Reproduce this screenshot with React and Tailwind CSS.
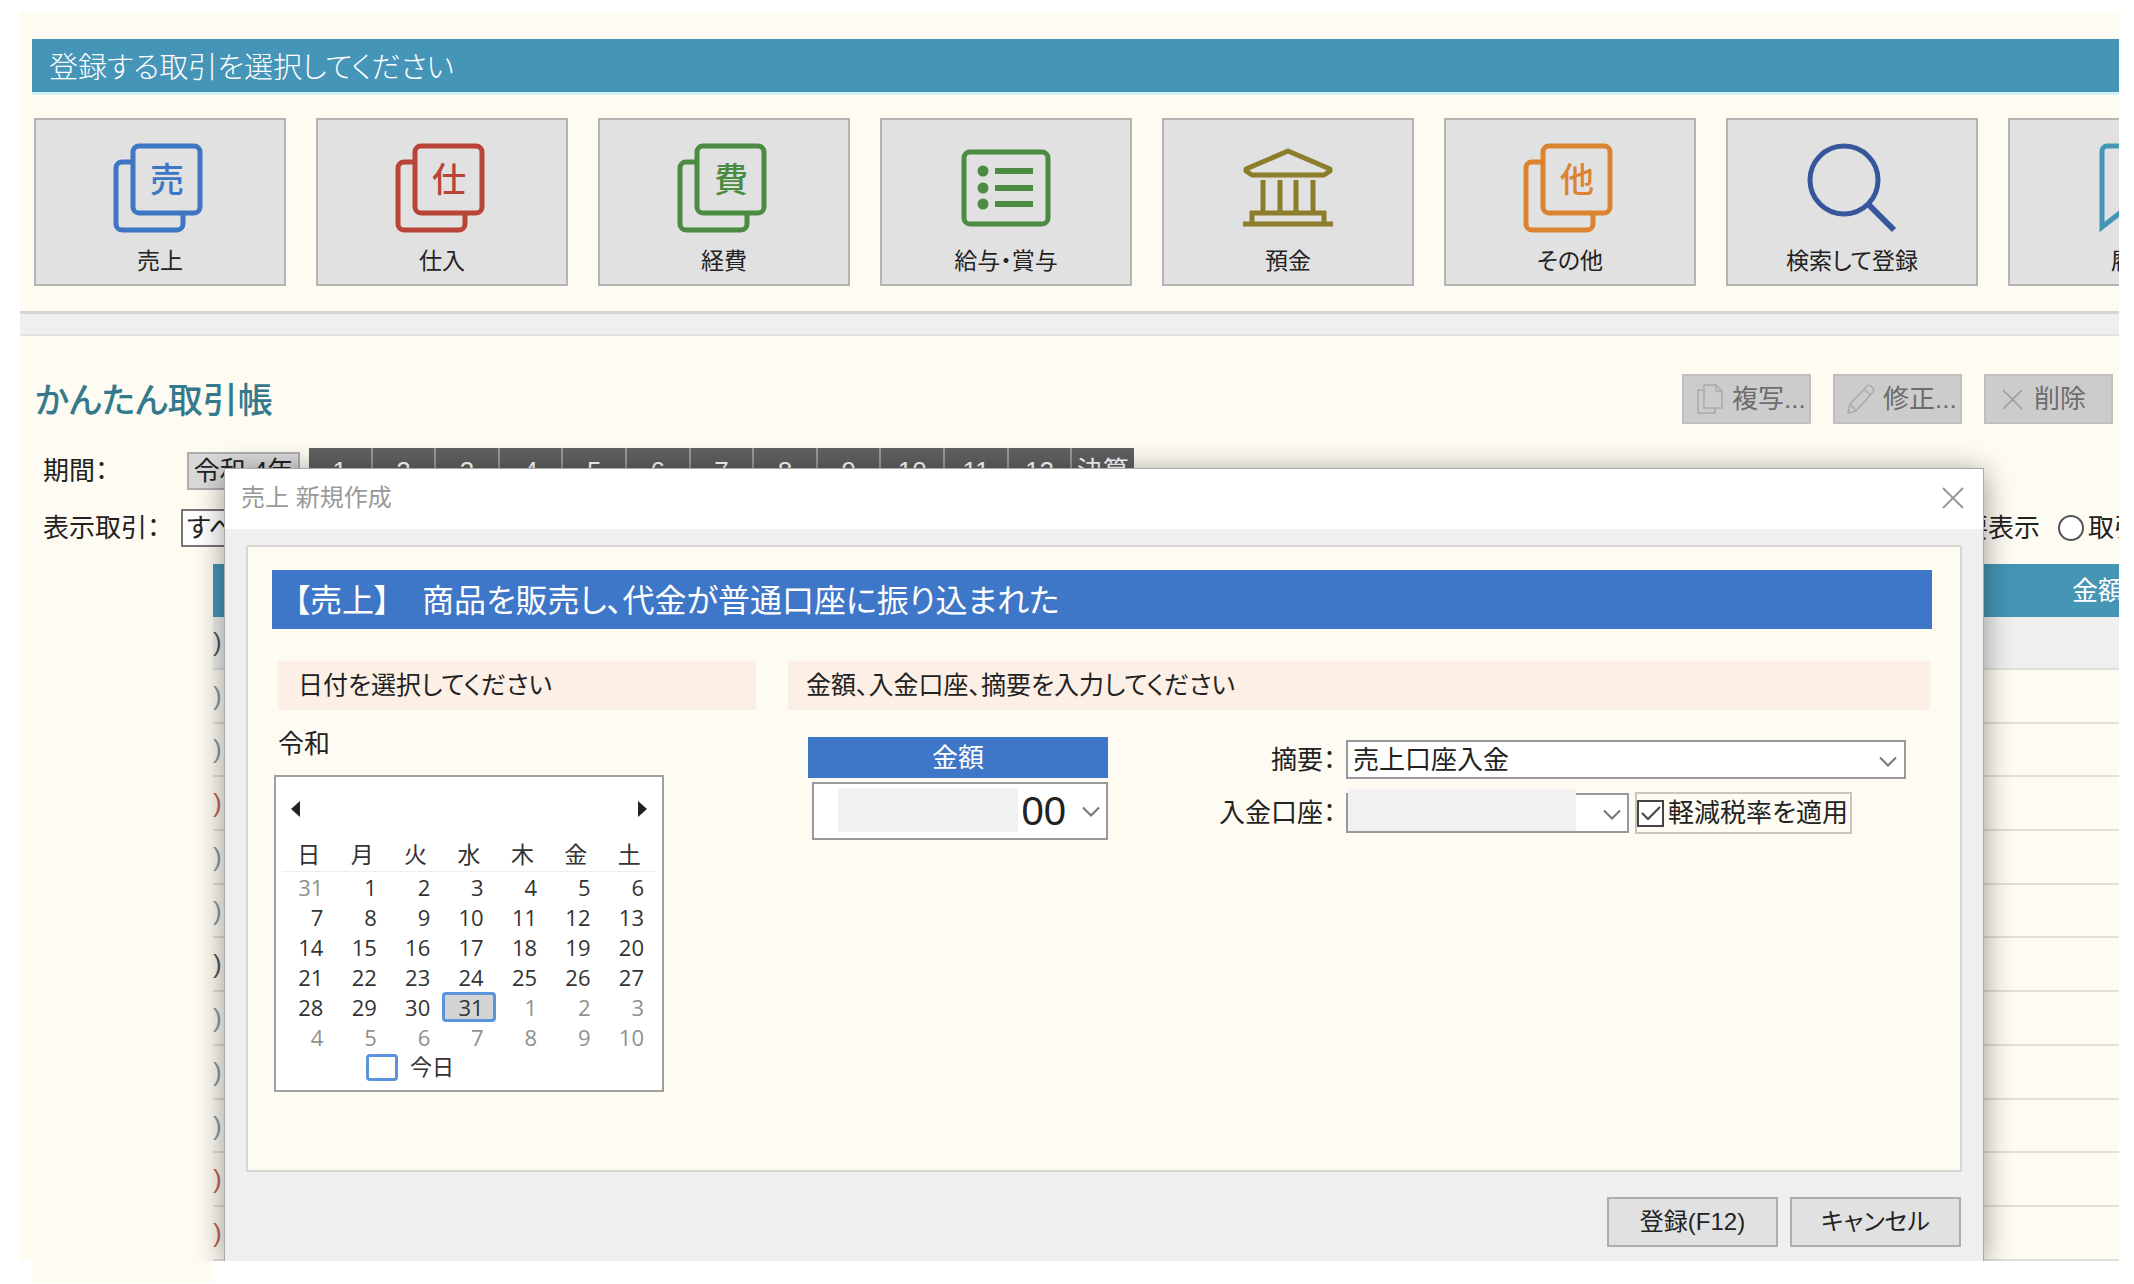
const DocIcon = ({ char, className }) => (
  <svg width="90" height="90" viewBox="2 0 90 90" fill="none" stroke="currentColor" strokeWidth="5" className={`overflow-visible ${className}`}>
    <path d="M18 19 H9 a6 6 0 0 0 -6 6 V81 a6 6 0 0 0 6 6 H64 a6 6 0 0 0 6 -6 V71" />
    <rect x="20" y="3" width="67" height="67" rx="6" />
    <text x="54" y="49" textAnchor="middle" fontSize="34" fontWeight="500" fill="currentColor" stroke="none">
      {char}
    </text>
  </svg>
);

const ListIcon = () => (
  <svg width="90" height="90" viewBox="0 0 90 90" fill="none" stroke="currentColor" strokeWidth="5" className="text-[#4c8c42]">
    <rect x="3" y="9" width="84" height="72" rx="6" />
    <path d="M34 28 H72 M34 45 H72 M34 61 H72" strokeWidth="6" />
    <g fill="currentColor" stroke="none">
      <circle cx="22" cy="28" r="5.5" />
      <circle cx="22" cy="45" r="5.5" />
      <circle cx="22" cy="61" r="5.5" />
    </g>
  </svg>
);

const BankIcon = () => (
  <svg width="90" height="90" viewBox="0 0 90 90" fill="none" stroke="currentColor" strokeWidth="5" className="text-[#8c7d2b]">
    <path d="M45 8 L3 26 V28 L9 32 H81 L87 28 V26 Z" strokeLinejoin="round" />
    <path d="M20 37 V69 M37 37 V69 M53 37 V69 M70 37 V69" />
    <path d="M9 80 V70 H81 V80 M0 81 H90" />
  </svg>
);

const SearchIcon = () => (
  <svg width="90" height="90" viewBox="0 0 90 90" fill="none" stroke="currentColor" strokeWidth="5" className="text-[#36579b]">
    <circle cx="37" cy="37" r="34" />
    <path d="M61 61 L87 87" strokeWidth="6" />
  </svg>
);

const BookmarkIcon = () => (
  <svg width="90" height="90" viewBox="0 0 90 90" fill="none" stroke="currentColor" strokeWidth="5" className="text-[#4595b5]">
    <path d="M13 84 V8 a5 5 0 0 1 5 -5 H72 a5 5 0 0 1 5 5 V84 L45 59 Z" />
  </svg>
);

const CopyIcon = () => (
  <svg width="28" height="30" viewBox="0 0 28 30" fill="none" stroke="#aaa" strokeWidth="1.5">
    <path d="M8 6 H2 V29 H19 V24" />
    <path d="M8 1 H20 L26 7 V24 H8 Z M20 1 V7 H26" />
  </svg>
);

const PencilIcon = () => (
  <svg width="28" height="30" viewBox="0 0 28 30" fill="none" stroke="#aaa" strokeWidth="1.5" strokeLinejoin="round">
    <path d="M1 29 L3 20 L20 2 Q22 0 25 3 Q28 6 26 8 L9 27 Z M17 5 L23 11 M3 20 L9 27" />
  </svg>
);

const CrossIcon = () => (
  <svg width="28" height="30" viewBox="0 0 28 30" fill="none" stroke="#999" strokeWidth="1.5">
    <path d="M5 6 L24 25 M24 6 L5 25" />
  </svg>
);

const Chevron = ({ className }) => (
  <svg width="18" height="12" viewBox="0 0 18 12" fill="none" stroke="#777" strokeWidth="2" className={className}>
    <path d="M1 1.5 L9 9.5 L17 1.5" />
  </svg>
);

const ENTRIES = [
  { label: '売上', icon: <DocIcon char="売" className="text-[#3f76c4]" /> },
  { label: '仕入', icon: <DocIcon char="仕" className="text-[#b84537]" /> },
  { label: '経費', icon: <DocIcon char="費" className="text-[#4c8c42]" /> },
  { label: '給与・賞与', icon: <ListIcon /> },
  { label: '預金', icon: <BankIcon /> },
  { label: 'その他', icon: <DocIcon char="他" className="text-[#dc8330]" /> },
  { label: '検索して登録', icon: <SearchIcon /> },
  { label: '履歴', icon: <BookmarkIcon /> },
];

const MONTHS = ['1', '2', '3', '4', '5', '6', '7', '8', '9', '10', '11', '12', '決算'];

const ROW_COLORS = [
  'text-[#555]',
  'text-[#7f9aa8]',
  'text-[#7f9aa8]',
  'text-[#c0605a]',
  'text-[#7f9aa8]',
  'text-[#7f9aa8]',
  'text-[#555]',
  'text-[#7f9aa8]',
  'text-[#7f9aa8]',
  'text-[#7f9aa8]',
  'text-[#c0605a]',
  'text-[#c0605a]',
];

const WEEKDAYS = ['日', '月', '火', '水', '木', '金', '土'];

const WEEKS = [
  [31, 1, 2, 3, 4, 5, 6],
  [7, 8, 9, 10, 11, 12, 13],
  [14, 15, 16, 17, 18, 19, 20],
  [21, 22, 23, 24, 25, 26, 27],
  [28, 29, 30, 31, 1, 2, 3],
  [4, 5, 6, 7, 8, 9, 10],
];

const isOutside = (week, day) => (week === 0 && day > 20) || (week > 3 && day < 20);

const ToolButton = ({ icon, children }) => (
  <button className="flex h-[50px] w-[129px] items-center gap-2 border-2 border-[#bfbfbf] bg-[#ccc] pl-[12px] text-[26px] leading-none whitespace-nowrap text-[#6d6d6d]">
    {icon}
    {children}
  </button>
);

const Calendar = () => (
  <div className="mt-[16px] h-[317px] w-[390px] border-2 border-[#a0a0a0] bg-white px-[6px] text-[#333]">
    <div className="flex h-[64px] items-center justify-between px-[9px]">
      <button aria-label="前の月">
        <svg width="10" height="16" viewBox="0 0 10 16" fill="#222">
          <path d="M9 0 L0 8 L9 16 Z" />
        </svg>
      </button>
      <button aria-label="次の月">
        <svg width="10" height="16" viewBox="0 0 10 16" fill="#222">
          <path d="M1 0 L10 8 L1 16 Z" />
        </svg>
      </button>
    </div>
    <table className="w-full table-fixed border-collapse">
      <thead>
        <tr className="h-[30px] border-b border-[#eee] text-[23px] leading-none">
          {WEEKDAYS.map((d) => (
            <th key={d} className="p-0 font-normal">{d}</th>
          ))}
        </tr>
      </thead>
      <tbody className="font-['Open_Sans',sans-serif] text-[22px] leading-none">
        {WEEKS.map((days, week) => (
          <tr key={week} className="h-[30px]">
            {days.map((day, i) => (
              <td key={i} className="p-0">
                <div
                  className={
                    week === 4 && day === 31
                      ? 'flex h-[30px] items-center justify-end rounded-sm border-3 border-[#5b93dd] bg-[#d4d4d4] pr-[9px]'
                      : `flex h-[30px] items-center justify-end pr-[12px] ${isOutside(week, day) ? 'text-[#909090]' : ''}`
                  }
                >
                  {day}
                </div>
              </td>
            ))}
          </tr>
        ))}
      </tbody>
    </table>
    <button className="ml-[84px] flex h-[32px] items-center gap-3 text-[22px] leading-none">
      <span className="h-[27px] w-[32px] rounded-sm border-3 border-[#5b93dd]" />
      今日
    </button>
  </div>
);

const SaleDialog = () => (
  <div
    role="dialog"
    aria-label="売上 新規作成"
    className="absolute top-[456px] right-[135px] bottom-0 left-[204px] flex flex-col border-x border-t border-[#aaa] bg-[#efefef] shadow-[0_4px_28px_rgba(0,0,0,0.4)]"
  >
    <div className="flex h-[60px] shrink-0 items-center justify-between bg-white pr-[18px] pb-[2px] pl-[16px]">
      <h2 className="text-[24px] leading-none text-[#999]">売上 新規作成</h2>
      <button aria-label="閉じる">
        <svg width="24" height="24" viewBox="0 0 24 24" stroke="#999" strokeWidth="2">
          <path d="M2 2 L22 22 M22 2 L2 22" />
        </svg>
      </button>
    </div>

    <div className="mx-[21px] mt-[16px] flex-1 border-2 border-[#d6d6d6] bg-[#fefbf2] pt-[23px] pr-[28px] pl-[24px]">
      <h3 className="flex h-[59px] items-center bg-[#3e76c8] px-[22px] pt-[3px] text-[32px] leading-none text-white">
        【売上】{'\u3000'}商品を販売し、代金が普通口座に振り込まれた
      </h3>

      <div className="mt-[32px] grid grid-cols-[478px_1fr] gap-[32px] pr-[2px] pl-[6px]">
        <section>
          <h4 className="flex h-[49px] items-center bg-[#fcefe6] px-[20px] text-[25px] leading-none">日付を選択してください</h4>
          <p className="mt-[19px] text-[26px] leading-[30px]">令和</p>
          <div className="-ml-1">
            <Calendar />
          </div>
        </section>

        <section>
          <h4 className="flex h-[49px] items-center bg-[#fcefe6] px-[18px] text-[25px] leading-none">
            金額、入金口座、摘要を入力してください
          </h4>
          <div className="mt-[27px] flex items-start justify-between pr-[24px] pl-[20px]">
            <div className="w-[300px]">
              <label htmlFor="amount" className="flex h-[41px] items-center justify-center bg-[#3e76c8] text-[26px] leading-none text-white">
                金額
              </label>
              <div className="relative mt-1 ml-1">
                <input
                  id="amount"
                  defaultValue="00"
                  className="h-[58px] w-full border-2 border-[#999] bg-white pr-[40px] text-right text-[40px] leading-none"
                />
                <span className="absolute top-[6px] left-[26px] h-[44px] w-[180px] bg-[#f1f1f1]" />
                <Chevron className="absolute top-[24px] right-[8px]" />
              </div>
            </div>

            <div className="mt-[3px] grid grid-cols-[128px_560px] gap-y-[12px] text-[26px] leading-none">
              <label htmlFor="summary" className="self-center pr-[10px] text-right">摘要：</label>
              <div className="relative h-[40px]">
                <select id="summary" className="h-[39px] w-full appearance-none border-2 border-[#999] bg-white pl-[5px] leading-none">
                  <option>売上口座入金</option>
                </select>
                <Chevron className="pointer-events-none absolute top-[16px] right-[9px]" />
              </div>

              <label htmlFor="account" className="self-center pr-[10px] text-right">入金口座：</label>
              <div className="flex items-center gap-[6px]">
                <div className="relative">
                  <select id="account" className="block h-[40px] w-[283px] appearance-none border-2 border-[#999] bg-white">
                    <option></option>
                  </select>
                  <span className="pointer-events-none absolute -top-1 left-[2px] h-[42px] w-[228px] bg-[#f1f1f1]" />
                  <Chevron className="pointer-events-none absolute top-[16px] right-[8px]" />
                </div>
                <label className="flex h-[42px] w-[217px] items-center gap-[4px] border-2 border-[#c8c5bf] whitespace-nowrap">
                  <span className="relative flex">
                    <input type="checkbox" defaultChecked className="h-[27px] w-[27px] appearance-none border-2 border-[#444] bg-white" />
                    <svg width="27" height="27" viewBox="0 0 27 27" fill="none" stroke="#444" strokeWidth="2" className="pointer-events-none absolute inset-0">
                      <path d="M5 13 L11 19 L23 7" />
                    </svg>
                  </span>
                  軽減税率を適用
                </label>
              </div>
            </div>
          </div>
        </section>
      </div>
    </div>

    <div className="flex shrink-0 justify-end gap-[12px] pt-[25px] pr-[22px] pb-[14px] text-[24px] leading-none">
      <button className="h-[50px] w-[171px] border-2 border-[#adadad] bg-[#e1e1e1]">登録(F12)</button>
      <button className="h-[50px] w-[171px] border-2 border-[#adadad] bg-[#e1e1e1]">キャンセル</button>
    </div>
  </div>
);

const App = () => {
  return (
    <div className="overflow-hidden bg-white pt-[12px] pr-[15px] pl-[20px] font-['Liberation_Sans','Noto_Sans_CJK_JP',sans-serif] text-[#222] [font-feature-settings:'palt']">
      <div className="relative overflow-hidden bg-[#fefbf2]">
        <header className="pt-[27px] pl-[12px]">
          <h1 className="flex h-[56px] items-center border-b-3 border-[#d5effa] bg-[#4595b8] px-[17px] pt-[6px] text-[29px] leading-none font-light text-white">
            登録する取引を選択してください
          </h1>
        </header>

        <nav className="flex gap-[30px] overflow-hidden pt-[23px] pb-[25px] pl-[14px]">
          {ENTRIES.map(({ label, icon }) => (
            <button
              key={label}
              className="flex h-[168px] w-[252px] shrink-0 flex-col items-center border-2 border-[#b4b4b4] bg-[#e1e1e1] pt-[23px] text-[23px] leading-none whitespace-nowrap"
            >
              {icon}
              <span className="mt-[17px]">{label}</span>
            </button>
          ))}
        </nav>

        <div className="h-[25px] border-t-3 border-b-2 border-t-[#d6d5cf] border-b-[#e2e2de] bg-[#efefef]" />

        <main className="pt-[38px]">
          <div className="flex h-[50px] items-center justify-between pr-[6px] pl-[15px]">
            <h2 className="pt-[3px] text-[35px] leading-none font-medium text-[#35798c]">かんたん取引帳</h2>
            <div className="flex gap-[22px]">
              <ToolButton icon={<CopyIcon />}>複写...</ToolButton>
              <ToolButton icon={<PencilIcon />}>修正...</ToolButton>
              <ToolButton icon={<CrossIcon />}>削除</ToolButton>
            </div>
          </div>

          <div className="mt-[24px] flex h-[46px] items-center pl-[23px] text-[26px] leading-none">
            <span className="w-[144px]">期間：</span>
            <button className="h-[38px] w-[113px] border-2 border-[#adadad] bg-[#d9d9d9] whitespace-nowrap">令和 4年</button>
            <div className="ml-[9px] flex h-full w-[825px] divide-x-2 divide-[#999] bg-[#606060] text-[26px] text-white">
              {MONTHS.map((m) => (
                <button key={m} className="flex-1 whitespace-nowrap">{m}</button>
              ))}
            </div>
          </div>

          <div className="mt-[15px] flex h-[38px] items-center pl-[23px] text-[26px] leading-none whitespace-nowrap">
            <label htmlFor="filter" className="w-[138px]">表示取引：</label>
            <select id="filter" className="h-[38px] w-[240px] appearance-none border-2 border-[#777] bg-white pl-[4px]">
              <option>すべて</option>
            </select>
            <div className="ml-auto flex gap-[18px]">
              <label className="flex items-center gap-[4px]">
                <input type="radio" name="view" className="h-[26px] w-[26px] appearance-none rounded-full border-2 border-[#555] bg-white" />
                摘要表示
              </label>
              <label className="flex w-[61px] items-center gap-[4px] overflow-hidden">
                <input type="radio" name="view" className="h-[26px] w-[26px] shrink-0 appearance-none rounded-full border-2 border-[#555] bg-white" />
                取引
              </label>
            </div>
          </div>

          <div className="mt-[17px] overflow-hidden pl-[193px]">
            <table className="h-[697px] w-full table-fixed border-collapse text-[26px] leading-none">
              <thead>
                <tr className="h-[53px] bg-[#4595b5] text-white">
                  <th className="p-0"></th>
                  <th className="w-[47px] p-0 text-left font-normal whitespace-nowrap">金額</th>
                </tr>
              </thead>
              <tbody>
                {ROW_COLORS.map((color, i) => (
                  <tr key={i} className="border-b-2 border-[#e0dfda] first:bg-[#efefef]">
                    <td className={`p-0 ${color}`}>)</td>
                    <td className="p-0"></td>
                  </tr>
                ))}
              </tbody>
            </table>
          </div>
        </main>

        <SaleDialog />
      </div>
      <div className="ml-[13px] h-[22px] w-[180px] bg-[#fefbf2]" />
    </div>
  );
};

export default App;
